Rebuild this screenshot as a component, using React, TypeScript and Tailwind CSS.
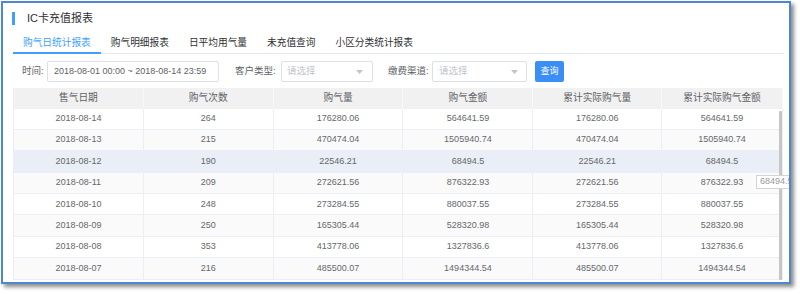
import React from "react";

const headers = ["售气日期", "购气次数", "购气量", "购气金额", "累计实际购气量", "累计实际购气金额"];
const rows = [
  ["2018-08-14", "264", "176280.06", "564641.59", "176280.06", "564641.59"],
  ["2018-08-13", "215", "470474.04", "1505940.74", "470474.04", "1505940.74"],
  ["2018-08-12", "190", "22546.21", "68494.5", "22546.21", "68494.5"],
  ["2018-08-11", "209", "272621.56", "876322.93", "272621.56", "876322.93"],
  ["2018-08-10", "248", "273284.55", "880037.55", "273284.55", "880037.55"],
  ["2018-08-09", "250", "165305.44", "528320.98", "165305.44", "528320.98"],
  ["2018-08-08", "353", "413778.06", "1327836.6", "413778.06", "1327836.6"],
  ["2018-08-07", "216", "485500.07", "1494344.54", "485500.07", "1494344.54"],
];
const widths = ["w-[130px]", "w-[130px]", "w-[130px]", "w-[130px]", "w-[129px]", "w-[121px]"];
const tabs = ["购气日统计报表", "购气明细报表", "日平均用气量", "未充值查询", "小区分类统计报表"];

function Arrow() {
  return (
    <svg width="7" height="4" viewBox="0 0 7 4" className="shrink-0">
      <path d="M0 0 L7 0 L3.5 4 Z" fill="#c0c4cc" />
    </svg>
  );
}

export default function App() {
  return (
    <div
      className="w-[800px] h-[294px] bg-white pl-[1px] pt-[1px] overflow-hidden"
      style={{ fontFamily: '"Liberation Sans", "Noto Sans CJK SC", sans-serif' }}
    >
      <div className="relative w-[790px] h-[283px] border-2 border-[#4d87d3] bg-white overflow-hidden shadow-[3px_3px_4px_rgba(0,0,0,0.45)]">
        <div className="pl-[9px] pr-[5px]">
          {/* title */}
          <div className="pt-[9px] h-[22px] flex items-center">
            <div className="w-[3px] h-[13px] bg-[#409eff]" />
            <span className="ml-[12px] text-[11px] leading-[13px] text-[#303133]">IC卡充值报表</span>
          </div>
          <div className="pl-[1px]">
            {/* tabs */}
            <div className="flex border-b border-[#e4e7ed]">
              {tabs.map((t, i) => (
                <div
                  key={t}
                  className={
                    i === 0
                      ? "-mb-px px-[10px] pt-[12px] pb-[3px] text-[9.7px] leading-[12px] text-[#409eff] border-b-2 border-[#409eff]"
                      : "-mb-px px-[10px] pt-[12px] pb-[3px] text-[9.7px] leading-[12px] text-[#303133] border-b-2 border-transparent"
                  }
                >
                  {t}
                </div>
              ))}
            </div>
            {/* filters */}
            <div className="mt-[7px] h-[21px] flex items-center pl-[9px] text-[9.5px] text-[#606266]">
              <span className="w-[25px] shrink-0">时间:</span>
              <div className="w-[172px] h-[21px] border border-[#dcdfe6] rounded-[2px] flex items-center pl-[6px] text-[9px] text-[#606266]">
                2018-08-01 00:00 ~ 2018-08-14 23:59
              </div>
              <span className="ml-[16px] w-[46px] shrink-0">客户类型:</span>
              <div className="w-[92px] h-[21px] border border-[#dcdfe6] rounded-[2px] flex items-center justify-between pl-[5px] pr-[9px] text-[#c0c4cc]">
                <span>请选择</span>
                <Arrow />
              </div>
              <span className="ml-[15px] w-[44px] shrink-0">缴费渠道:</span>
              <div className="w-[95px] h-[21px] border border-[#dcdfe6] rounded-[2px] flex items-center justify-between pl-[6px] pr-[8px] text-[#c0c4cc]">
                <span>请选择</span>
                <Arrow />
              </div>
              <div className="ml-[8px] w-[29px] h-[21px] bg-[#3a8ef6] rounded-[2px] flex items-center justify-center text-[9px] text-white">
                查询
              </div>
            </div>
            {/* table */}
            <div className="mt-[6px] w-[770px] border-l border-[#ebeef5]">
              <div className="flex h-[20.5px] bg-[#f1f1f1] text-[9.7px] text-[#606266]">
                {headers.map((h, i) => (
                  <div
                    key={h}
                    className={`${widths[i]} flex items-center justify-center border-r border-[#f8f8f8]`}
                  >
                    {h}
                  </div>
                ))}
              </div>
              <div className="relative">
                {rows.map((r, ri) => (
                  <div
                    key={ri}
                    className={`flex h-[21.4px] border-b border-[#ebeef5] text-[9px] text-[#66686c] ${
                      ri === 2 ? "bg-[#e9eef7]" : ri % 2 === 1 ? "bg-[#fafafa]" : "bg-white"
                    }`}
                  >
                    {r.map((c, ci) => (
                      <div
                        key={ci}
                        className={`${widths[ci]} flex items-center justify-center border-r border-[#ebeef5]`}
                      >
                        {c}
                      </div>
                    ))}
                  </div>
                ))}
                <div className="absolute right-[1px] top-[2px] bottom-0 w-[3px] bg-[#c6c6c6] rounded-[1px]" />
              </div>
            </div>
          </div>
        </div>
        <div className="absolute left-[753px] top-[172px] h-[14px] w-[40px] border border-[#d4d4d4] bg-white pl-[3px] flex items-center text-[9px] text-[#9a9a9a] whitespace-nowrap">
          68494.5
        </div>
      </div>
    </div>
  );
}
